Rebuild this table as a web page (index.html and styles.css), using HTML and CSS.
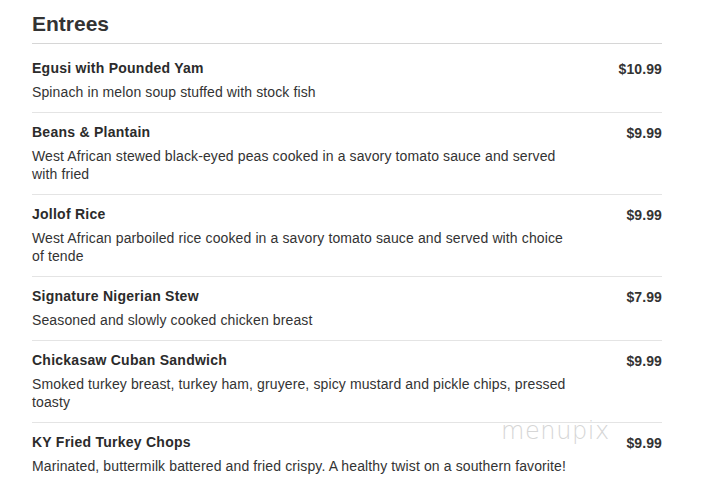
FILE: index.html
```html
<!DOCTYPE html>
<html>
<head>
<meta charset="utf-8">
<link rel="stylesheet" href="styles.css">
</head>
<body>
<div class="menu">
  <h2 class="section-title">Entrees</h2>
  <div class="items">
    <div class="item first">
      <div class="info">
        <div class="name">Egusi with Pounded Yam</div>
        <div class="desc">Spinach in melon soup stuffed with stock fish</div>
      </div>
      <div class="price">$10.99</div>
    </div>
    <div class="item">
      <div class="info">
        <div class="name">Beans &amp; Plantain</div>
        <div class="desc">West African stewed black-eyed peas cooked in a savory tomato sauce and served with fried</div>
      </div>
      <div class="price">$9.99</div>
    </div>
    <div class="item">
      <div class="info">
        <div class="name">Jollof Rice</div>
        <div class="desc">West African parboiled rice cooked in a savory tomato sauce and served with choice of tende</div>
      </div>
      <div class="price">$9.99</div>
    </div>
    <div class="item">
      <div class="info">
        <div class="name">Signature Nigerian Stew</div>
        <div class="desc">Seasoned and slowly cooked chicken breast</div>
      </div>
      <div class="price">$7.99</div>
    </div>
    <div class="item">
      <div class="info">
        <div class="name">Chickasaw Cuban Sandwich</div>
        <div class="desc">Smoked turkey breast, turkey ham, gruyere, spicy mustard and pickle chips, pressed toasty</div>
      </div>
      <div class="price">$9.99</div>
    </div>
    <div class="item">
      <div class="info">
        <div class="name">KY Fried Turkey Chops</div>
        <div class="desc">Marinated, buttermilk battered and fried crispy. A healthy twist on a southern favorite!</div>
      </div>
      <div class="price">$9.99</div>
    </div>
  </div>
  <div class="watermark">menupix</div>
</div>
</body>
</html>
```
FILE: styles.css
```css
html, body {
  margin: 0;
  padding: 0;
  background: #fff;
}
body {
  font-family: "Liberation Sans", Arial, sans-serif;
  color: #333;
}
.menu {
  position: relative;
  width: 630px;
  margin: 0 0 0 32px;
  padding-top: 11px;
}
.section-title {
  margin: 0;
  font-size: 21px;
  line-height: 26px;
  font-weight: bold;
  color: #333;
  padding-bottom: 6px;
  border-bottom: 1px solid #d6d6d6;
}
.item {
  display: flex;
  justify-content: space-between;
  align-items: flex-start;
  padding: 9px 0 11px;
  border-bottom: 1px solid #e4e4e4;
}
.item.first {
  padding-top: 14px;
}
.item:last-child {
  border-bottom: none;
}
.info {
  max-width: 540px;
}
.name {
  font-size: 14px;
  line-height: 20px;
  font-weight: bold;
  color: #2b2b2b;
  letter-spacing: 0.25px;
}
.desc {
  margin-top: 5px;
  font-size: 14px;
  line-height: 18px;
  color: #333;
  letter-spacing: 0.12px;
}
.price {
  font-size: 14px;
  line-height: 20px;
  font-weight: bold;
  color: #333;
  padding-top: 1px;
  letter-spacing: 0.1px;
}
.watermark {
  position: absolute;
  left: 469px;
  top: 417px;
  font-family: "DejaVu Sans", sans-serif;
  font-weight: 200;
  font-size: 24px;
  color: #d6d6d6;
  letter-spacing: 0.6px;
}
```
